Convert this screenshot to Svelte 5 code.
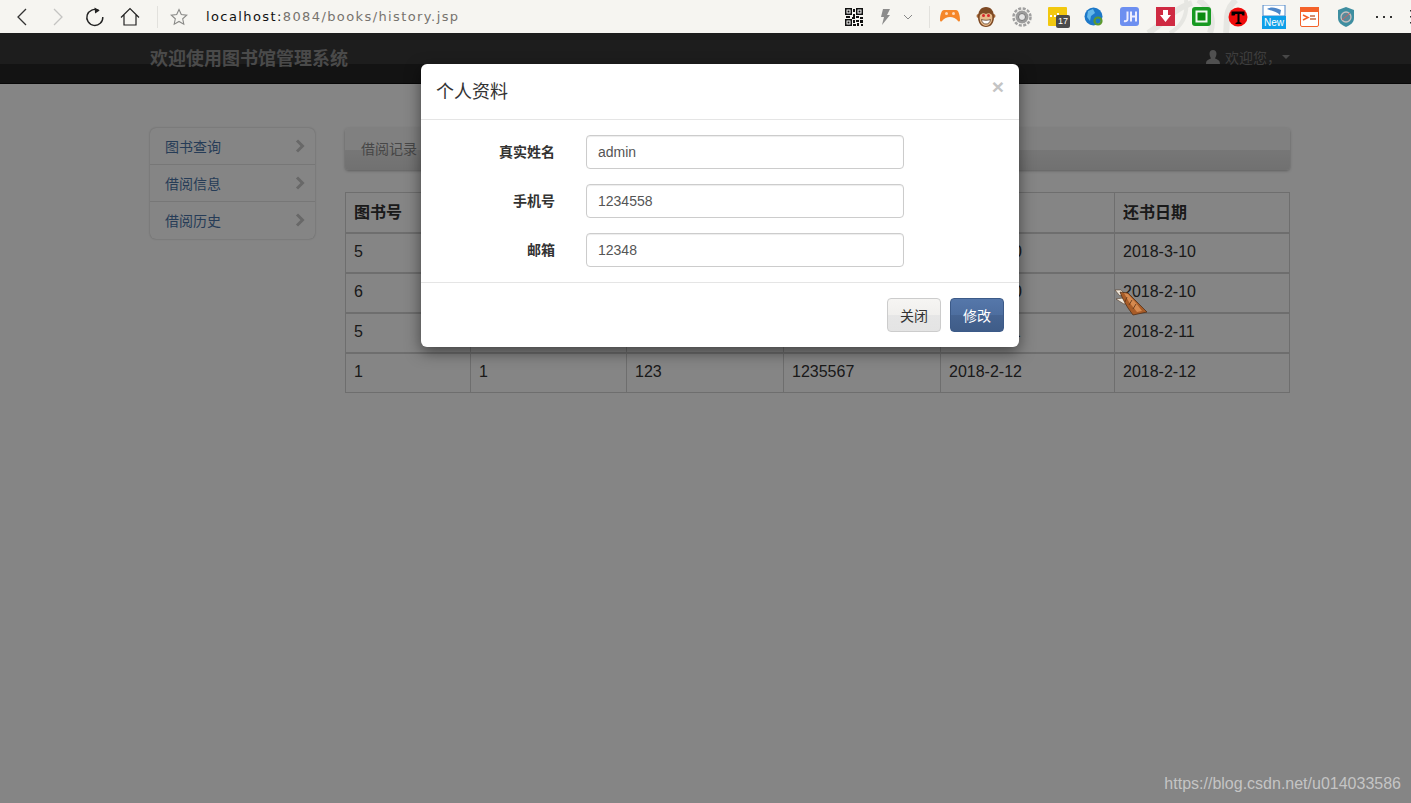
<script lang="ts">
    const menu = ['图书查询', '借阅信息', '借阅历史'];
    const heads = ['图书号', '读者号', '姓名', '手机号', '借书日期', '还书日期'];
    const rows = [
        ['5', '1', '123', '1235567', '2018-2-10', '2018-3-10'],
        ['6', '1', '123', '1235567', '2018-2-10', '2018-2-10'],
        ['5', '1', '123', '1235567', '2018-2-11', '2018-2-11'],
        ['1', '1', '123', '1235567', '2018-2-12', '2018-2-12']
    ];
    const fields = [
        { label: '真实姓名', value: 'admin' },
        { label: '手机号', value: '1234558' },
        { label: '邮箱', value: '12348' }
    ];
</script>

<div class="shell">
    <header class="toolbar">
        <svg class="swirl" width="120" height="33" viewBox="0 0 120 33" fill="none" stroke="#e6e6e2" stroke-width="6">
            <path d="M8 33C24 24 30 10 52 3" />
            <path d="M58 0C72 8 74 22 70 33" />
            <path d="M86 33C88 20 84 10 96 0" />
            <path d="M30 33C42 26 48 16 46 0" stroke-width="4" />
        </svg>
        <div class="nav-btns">
            <svg width="14" height="20" viewBox="0 0 14 20" fill="none" stroke="#333" stroke-width="1.3"><path d="M11 2 3 10l8 8" /></svg>
            <svg class="fwd" width="14" height="20" viewBox="0 0 14 20" fill="none" stroke="#c4c4c2" stroke-width="1.3"><path d="M3 2l8 8-8 8" /></svg>
            <svg class="reload" width="20" height="20" viewBox="0 0 20 20" fill="none" stroke="#222" stroke-width="1.4"><path d="M13.6 3.4A8 8 0 1 0 17.8 10" /><path d="M9.5 .6l5.2 2.8-4.6 3z" fill="#222" stroke="none" /></svg>
            <svg class="home" width="20" height="20" viewBox="0 0 20 20" fill="none" stroke="#222" stroke-width="1.2"><path d="M1 10.5 10 1.5l9 9M4 8v10h12V8" /></svg>
            <span class="sep first"></span>
            <svg class="star" width="18" height="18" viewBox="0 0 18 18" fill="none" stroke="#8a8a88" stroke-width="1.1"><path d="M9 1.5l2.3 5 5.4.6-4 3.7 1.1 5.4L9 13.5l-4.800 2.700 1.100-5.400-4-3.700 5.400-.6z" /></svg>
        </div>
        <div class="url"><b>localhost:</b>8084/books/history.jsp</div>
        <div class="tools">
            <svg class="qr" width="18" height="18" viewBox="0 0 18 18">
                <path fill="#111" d="M0 0h7v7H0zM11 0h7v7h-7zM0 11h7v7H0z" />
                <path fill="#fff" d="M1.500 1.500h4v4h-4zM12.500 1.500h4v4h-4zM1.500 12.500h4v4h-4z" />
                <path fill="#111" d="M2.500 2.500h2v2h-2zM13.500 2.500h2v2h-2zM2.500 13.500h2v2h-2zM8 1h2v3H8zM8 6h2v3H8zM1 8h4v2H1zM7 9h3v2H7zM11 8h3v2h-3zM15 9h3v2h-3zM8 12h2v3H8zM11 12h3v2h-3zM15 12h3v3h-3zM12 15h2v3h-2zM8 16h3v2H8zM16 16h2v2h-2z" />
            </svg>
            <svg class="bolt" width="10" height="16" viewBox="0 0 10 16"><path fill="#8c8c8c" d="M3 0h7L7 6h3L2 16l2-8H1z" /></svg>
            <svg class="chev" width="10" height="6" viewBox="0 0 10 6" fill="none" stroke="#888"><path d="M1 1l4 4 4-4" /></svg>
            <span class="sep"></span>
            <div class="apps">
                <svg width="20" height="20" viewBox="0 0 20 20"><path fill="#f5862a" d="M4 3h12c2.500 0 4 5 4 10 0 1.500-1 2-2 1-2-2.500-5-4-8-4s-6 1.500-8 4c-1 1-2 .5-2-1C0 8 1.500 3 4 3z" /><circle cx="6.500" cy="6.500" r="1.500" fill="#ffd9b8" /><circle cx="13.500" cy="6.500" r="1.500" fill="#ffd9b8" /></svg>
                <svg width="20" height="20" viewBox="0 0 20 20"><circle cx="2.500" cy="9" r="2" fill="#a66a3a" /><circle cx="17.500" cy="9" r="2" fill="#a66a3a" /><path fill="#7e4a24" d="M10 0c5 0 8 4 8 10s-3 10-8 10-8-4-8-10S5 0 10 0z" /><path fill="#e6b98a" d="M4 8c2-2 4-2 6-1 2-1 4-1 6 1 1 4 0 10-6 11C4 18 3 12 4 8z" /><circle cx="7.500" cy="8.500" r="1.500" fill="#d8262a" /><circle cx="12.500" cy="8.500" r="1.500" fill="#d8262a" /><path d="M5.500 12.500c3 1 6 1 9 0-.5 3-2 4.500-4.500 4.500s-4-1.500-4.500-4.500z" fill="#fff" stroke="#4a2a12" stroke-width=".7" /></svg>
                <svg width="20" height="20" viewBox="0 0 20 20"><circle cx="10" cy="10" r="8.500" fill="none" stroke="#a0a0a0" stroke-width="2.500" stroke-dasharray="3 1.500" /><circle cx="10" cy="10" r="6.500" fill="#9c9c9c" /><circle cx="10" cy="10" r="3.500" fill="#e4e4e4" stroke="#777" /></svg>
                <div class="app-y"><svg width="20" height="20" viewBox="0 0 20 20"><rect width="19" height="19" rx="1" fill="#f2c80f" /><path fill="#fff" d="M2 8h2v2H2zM6 8h2v2H6zM9 6h2v2H9z" /></svg><span class="badge">17</span></div>
                <svg width="20" height="20" viewBox="0 0 20 20"><circle cx="9.500" cy="9.500" r="9" fill="#1d78c8" /><path fill="#63b7ea" d="M4 4l5-2 2 4-4 3-1 5-3-4z" /><circle cx="14" cy="14" r="3.500" fill="none" stroke="#5d9a2e" stroke-width="2.200" /></svg>
                <svg width="20" height="20" viewBox="0 0 20 20"><rect width="19" height="19" rx="3" fill="#6d8ff0" /><path fill="none" stroke="#eef" stroke-width="2" d="M7.500 4.500V12c0 2-1.500 2.500-3.500 2M11 4.500v10M16 4.500v10M11 9.500h5" /></svg>
                <svg width="20" height="20" viewBox="0 0 20 20"><path fill="#cf2a42" d="M0 0h19v19H0z" /><path fill="#fff" d="M7 3h5v5h3l-5.500 7L4 8h3z" /></svg>
                <svg width="20" height="20" viewBox="0 0 20 20"><rect width="19" height="19" rx="3" fill="#189a22" /><rect x="3.500" y="3.500" width="12" height="12" fill="#f2faf2" /><rect x="5.500" y="5.500" width="8" height="8" fill="#0b8a10" /></svg>
                <svg width="20" height="20" viewBox="0 0 20 20"><circle cx="10" cy="10" r="9.500" fill="#ef0b0b" /><path fill="#000" d="M3.500 4.500h13v4h-2l-1-1.500h-2v8l2 1v1H7.500v-1l2-1V7h-2l-1 1.500h-3z" /></svg>
                <div class="app-new"><svg width="24" height="24" viewBox="0 0 24 24"><rect x="1" y="0" width="22" height="11" fill="#fff" stroke="#4d86c8" /><path d="M5 4c5-3 9-1 14 1l-1 5c-3-3-8-4-13-6z" fill="#4d86c8" /><rect y="11" width="24" height="13" fill="#0f9fe8" /></svg><span>New</span></div>
                <svg width="20" height="20" viewBox="0 0 20 20"><rect x=".5" y=".5" width="18" height="19" rx="1.500" fill="#fff" stroke="#f4622a" /><rect width="19" height="5" fill="#f4622a" /><path d="M3 8l5 2.500-5 2.500" stroke="#f4622a" stroke-width="1.500" fill="none" /><path d="M10 9h5M10 12h6" stroke="#c86a40" stroke-width="1.300" /></svg>
                <svg width="20" height="20" viewBox="0 0 20 20"><path d="M10 0l8 3v8c0 5-4 7-8 9-4-2-8-4-8-9V3z" fill="#3e8ea0" /><circle cx="10" cy="10" r="5" fill="#5a8a9a" stroke="#c8c0c0" stroke-width="1.300" /><path d="M6 13l8-7" stroke="#d06060" /></svg>
                <svg class="dots" width="16" height="4" viewBox="0 0 16 4"><path fill="#333" d="M0 1h2v2H0zM7 1h2v2H7zM14 1h2v2h-2z" /></svg>
                <svg class="grip" width="4" height="14" viewBox="0 0 4 14"><path fill="#333" d="M0 0h4v1.500H0zM0 6h4v1.500H0zM0 12h4v1.500H0z" /></svg>
            </div>
        </div>
    </header>

    <nav class="navbar">
        <div class="brand">欢迎使用图书馆管理系统</div>
        <div class="user">
            <svg width="14" height="14" viewBox="0 0 14 14"><path fill="#999" d="M7 0c2.200 0 3.500 1.600 3.500 3.800S9.200 8 9 8.500c2.500 1 5 1.500 5 5.500H0c0-4 2.500-4.500 5-5.500C4.800 8 3.500 6 3.500 3.800S4.800 0 7 0z" /></svg>
            <span>欢迎您，</span>
            <i class="caret"></i>
        </div>
    </nav>

    <main class="page">
        <ul class="menu">
            {#each menu as item}
                <li>
                    <span>{item}</span>
                    <svg width="10" height="14" viewBox="0 0 10 14" fill="none" stroke="#c8c8c8" stroke-width="3"><path d="M2 1.500 7.500 7 2 12.500" /></svg>
                </li>
            {/each}
        </ul>
        <section class="content">
            <div class="crumb">借阅记录</div>
            <table>
                <colgroup>
                    <col style="width:125px" /><col style="width:156px" /><col style="width:157px" /><col style="width:157px" /><col style="width:174px" /><col style="width:175px" />
                </colgroup>
                <thead>
                    <tr>{#each heads as h}<th>{h}</th>{/each}</tr>
                </thead>
                <tbody>
                    {#each rows as row}
                        <tr>{#each row as cell}<td>{cell}</td>{/each}</tr>
                    {/each}
                </tbody>
            </table>
        </section>
    </main>

    <div class="backdrop"></div>

    <div class="modal">
        <div class="modal-head">
            <h4>个人资料</h4>
            <span class="close">×</span>
        </div>
        <form class="modal-body">
            {#each fields as f}
                <div class="group">
                    <label for={f.label}>{f.label}</label>
                    <input id={f.label} type="text" value={f.value} />
                </div>
            {/each}
        </form>
        <div class="modal-foot">
            <button class="btn">关闭</button>
            <button class="btn primary">修改</button>
        </div>
    </div>

    <svg class="glove" width="34" height="30" viewBox="0 0 34 30">
        <path fill="#f0e8dc" stroke="#4a2a12" stroke-width=".5" d="M0 2l6 0 3 3-4 3zM1 11l7-1 4 5-3 1z" />
        <path fill="#a85c28" stroke="#4a2a12" stroke-width=".7" d="M5 4l8 1 10 10 9 9-14 3-5-7-3-5-3-6z" />
        <path fill="#d68a50" d="M9 5l4 1 8 9 6 8-5 1-8-10z" />
        <path fill="none" stroke="#5a3418" stroke-width=".8" d="M12 9l-2 5M17 12l-3 5M21 16l-3 5" />
    </svg>

    <div class="mark">https://blog.csdn.net/u014033586</div>
</div>

<style>
    :global(body) {
        margin: 0;
        background: #fff;
    }

    .shell {
        position: relative;
        height: 803px;
        overflow: hidden;
        font-family: "Liberation Sans", "Noto Sans CJK SC", sans-serif;
        font-size: 14px;
        color: #333;
    }

    /* browser chrome */
    .toolbar {
        position: relative;
        height: 33px;
        display: flex;
        align-items: center;
        background: #f6f5f1;
        z-index: 3;
    }
    .swirl {
        position: absolute;
        left: 1140px;
        top: 0;
    }
    .nav-btns {
        display: flex;
        align-items: center;
        width: 206px;
        padding-left: 15px;
        box-sizing: border-box;
        flex: none;
    }
    .fwd { margin-left: 22px; }
    .reload { margin-left: 20px; }
    .home { margin-left: 15px; }
    .sep {
        width: 1px;
        height: 22px;
        background: #e2e1dd;
        flex: none;
    }
    .sep.first { margin-left: 17px; }
    .star { margin-left: 12px; }
    .url {
        font-family: "DejaVu Sans", sans-serif;
        font-size: 13px;
        letter-spacing: 1.4px;
        color: #77736e;
        white-space: nowrap;
        flex: none;
        width: 639px;
        position: relative;
    }
    .url b {
        font-weight: 400;
        color: #111;
    }
    .tools {
        position: relative;
        display: flex;
        align-items: center;
        flex: none;
    }
    .bolt { margin-left: 17px; }
    .chev { margin-left: 13px; }
    .tools .sep { margin-left: 16px; }
    .apps {
        display: flex;
        align-items: center;
        gap: 16px;
        margin-left: 10px;
    }
    .apps > svg, .apps > div { flex: none; }
    .app-y, .app-new {
        position: relative;
        width: 20px;
        height: 20px;
    }
    .badge {
        position: absolute;
        left: 8px;
        top: 8px;
        width: 14px;
        height: 13px;
        background: #4b4b4b;
        border-radius: 2px;
        color: #fff;
        font-size: 9px;
        line-height: 13px;
        text-align: center;
    }
    .app-new svg {
        position: absolute;
        left: -2px;
        top: -2px;
    }
    .app-new span {
        position: absolute;
        left: -2px;
        top: 9px;
        width: 24px;
        text-align: center;
        color: #fff;
        font-size: 10px;
        line-height: 13px;
    }
    .apps .dots { margin-left: 4px; }
    .apps .grip { margin-left: 2px; }

    /* page behind the dialog */
    .navbar {
        height: 51px;
        box-sizing: border-box;
        display: flex;
        justify-content: space-between;
        align-items: center;
        padding: 0 121px 4px 150px;
        background: linear-gradient(#383838 0, #383838 31px, #262626 31px, #262626 50px, #111 50px);
        color: #999;
    }
    .brand {
        font-size: 18px;
        font-weight: 700;
        color: #8f8f8f;
    }
    .user {
        display: flex;
        align-items: center;
        gap: 5px;
        font-size: 14px;
        color: #777;
    }
    .caret {
        width: 0;
        height: 0;
        margin-left: -4px;
        border: 4px solid transparent;
        border-top-color: #888;
        border-bottom: 0;
    }
    .page {
        display: flex;
        align-items: flex-start;
        gap: 30px;
        padding: 44px 0 0 150px;
    }
    .menu {
        width: 165px;
        margin: 0;
        padding: 0;
        list-style: none;
        background: #fff;
        border-radius: 6px;
        box-sizing: border-box;
        box-shadow: 0 0 2px rgba(0, 0, 0, .3);
    }
    .menu li {
        height: 37px;
        box-sizing: border-box;
        display: flex;
        justify-content: space-between;
        align-items: center;
        padding: 0 10px 0 15px;
        border-bottom: 1px solid #e5e5e5;
        color: #4a74a8;
        font-size: 14px;
    }
    .menu li:last-child {
        border-bottom: 0;
        padding-bottom: 1px;
    }
    .content {
        width: 945px;
    }
    .crumb {
        height: 42px;
        box-sizing: border-box;
        padding: 0 16px;
        line-height: 42px;
        color: #888;
        font-size: 14px;
        border-radius: 4px;
        background: linear-gradient(#f6f6f6 0, #f6f6f6 22px, #e4e4e4 22px, #d8d8d8 100%);
        box-shadow: 0 1px 3px rgba(0, 0, 0, .3);
    }
    table {
        width: 944px;
        margin-top: 22px;
        table-layout: fixed;
        border-collapse: collapse;
        font-size: 16px;
    }
    th, td {
        height: 40px;
        box-sizing: border-box;
        padding: 0 8px 2px;
        text-align: left;
        border: 1px solid #d4d4d4;
        border-top-width: 2px;
    }
    thead th {
        border-top-width: 1px;
        font-weight: 700;
    }

    .backdrop {
        position: absolute;
        inset: 33px 0 0 0;
        background: rgba(0, 0, 0, .48);
        z-index: 1;
    }

    /* dialog */
    .modal {
        position: absolute;
        left: 421px;
        top: 64px;
        width: 598px;
        background: #fff;
        border-radius: 6px;
        box-shadow: 0 5px 15px rgba(0, 0, 0, .5);
        z-index: 2;
    }
    .modal-head {
        position: relative;
        height: 56px;
        box-sizing: border-box;
        padding: 16px 15px 14px;
        border-bottom: 1px solid #e5e5e5;
    }
    h4 {
        margin: 0;
        font-size: 18px;
        font-weight: 400;
        line-height: 24px;
        color: #333;
    }
    .close {
        position: absolute;
        right: 15px;
        top: 10px;
        font-size: 21px;
        font-weight: 700;
        line-height: 26px;
        color: #c4c4c4;
    }
    .modal-body {
        display: flex;
        flex-direction: column;
        gap: 15px;
        padding: 15px;
        border-bottom: 1px solid #e5e5e5;
    }
    .group {
        display: flex;
        align-items: center;
        height: 34px;
    }
    label {
        width: 119px;
        padding-bottom: 2px;
        text-align: right;
        font-weight: 700;
        font-size: 14px;
    }
    input {
        width: 318px;
        height: 34px;
        box-sizing: border-box;
        margin-left: 31px;
        padding: 6px 11px;
        border: 1px solid #ccc;
        border-radius: 4px;
        font: 14px "Liberation Sans", sans-serif;
        color: #555;
        box-shadow: inset 0 1px 1px rgba(0, 0, 0, .075);
    }
    .modal-foot {
        display: flex;
        justify-content: flex-end;
        gap: 9px;
        padding: 15px;
    }
    .btn {
        width: 54px;
        height: 34px;
        padding: 0;
        border: 1px solid #ccc;
        border-radius: 4px;
        background: linear-gradient(#f6f5f3 0, #f0efed 50%, #e6e6e6 50%, #e4e4e4 100%);
        font: 14px "Liberation Sans", "Noto Sans CJK SC", sans-serif;
        color: #333;
    }
    .btn.primary {
        border-color: #3c5a88;
        background: linear-gradient(#5577aa 0, #4d6e9f 50%, #466492 50%, #3f5c88 100%);
        color: #fff;
    }

    .glove {
        position: absolute;
        left: 1115px;
        top: 288px;
        z-index: 4;
    }
    .mark {
        position: absolute;
        right: 10px;
        bottom: 10px;
        font-size: 16px;
        color: #c4c4c4;
        z-index: 4;
    }
</style>
